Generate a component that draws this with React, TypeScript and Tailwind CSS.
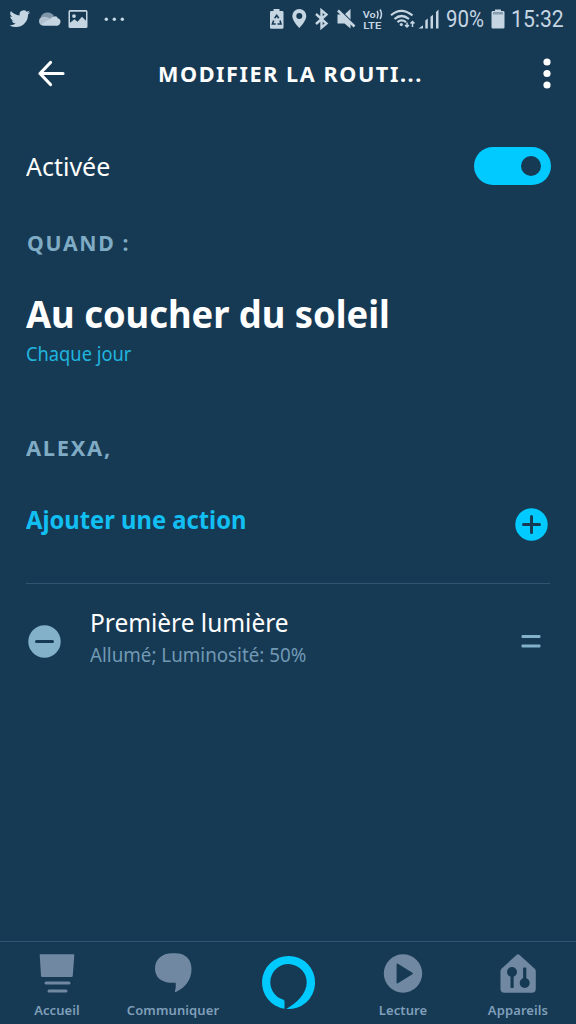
import type { ReactNode } from 'react';

function StatusBar() {
  return (
    <div className="flex h-10 items-center text-[#c5d5e2]">
      <svg className="h-10 w-[440px] shrink-0" viewBox="0 0 440 40" fill="currentColor">
        <path transform="translate(9.5 8.400) scale(.86)" d="M23.95 4.57a10 10 0 0 1-2.82.77 4.96 4.96 0 0 0 2.16-2.72c-.95.55-2 .95-3.13 1.18a4.92 4.92 0 0 0-8.38 4.48C7.69 8.1 4.07 6.13 1.64 3.16a4.92 4.92 0 0 0 1.52 6.57 4.9 4.9 0 0 1-2.23-.61v.06a4.92 4.92 0 0 0 3.95 4.83 5 5 0 0 1-2.21.08 4.94 4.94 0 0 0 4.6 3.42A9.87 9.87 0 0 1 0 19.54a13.94 13.94 0 0 0 7.55 2.21c9.05 0 14-7.5 14-13.98 0-.21 0-.42-.02-.63a9.94 9.94 0 0 0 2.46-2.55z" />
        <path d="M40.500 17.500a7.500 7.500 0 0 1 13.500-1.500l-4 4z" fill="#7f97aa" />
        <path d="M43 25.500a4.300 4.300 0 0 1-.5-8.500q4-1 7.500 1.500l7 7z" fill="#b0c0ce" />
        <path d="M41 24.500l9-5.500q2-2.700 5-2.700 2.500.2 2.800 2a3.700 3.700 0 0 1-2.300 7.200H43.500z" />
        <path fillRule="evenodd" d="M70 10h16a1.500 1.500 0 0 1 1.500 1.500v15a1.500 1.500 0 0 1-1.500 1.500H70a1.500 1.500 0 0 1-1.500-1.500v-15A1.500 1.500 0 0 1 70 10zm0 1.800v11l4.500-3.500 3 2.500 4.500-5 4 4v-9zM74 14.200a1.900 1.900 0 1 1 0 3.800 1.900 1.900 0 0 1 0-3.800z" />
        <circle cx="106.300" cy="19.200" r="1.700" /><circle cx="114.300" cy="19.200" r="1.700" /><circle cx="122.300" cy="19.200" r="1.700" />
        <path d="M273.500 9h6v2h2.700a1.300 1.300 0 0 1 1.300 1.300v15.200a1.300 1.300 0 0 1-1.300 1.300h-10.900a1.300 1.300 0 0 1-1.300-1.300V12.300a1.300 1.300 0 0 1 1.300-1.300h2.200z" />
        <path d="M274.700 18.200l2-2.900 2 2.900M280 20.500l1 3.500h-3.500M275.700 24h-3.300l1.300-3.500" fill="none" stroke="#173a54" strokeWidth="1.600" />
        <path fillRule="evenodd" d="M299.300 9a7 7 0 0 0-7 7c0 5 7 12 7 12s7-7 7-12a7 7 0 0 0-7-7zm0 4a3 3 0 1 1 0 6 3 3 0 0 1 0-6z" />
        <path d="M316 14l10.500 9.500-5 4.200V10.300l5 4.200L316 24" fill="none" stroke="currentColor" strokeWidth="2.400" />
        <path d="M337.500 14.500h5.500l7.500 7.500v6.500l-6-5h-7zM345 14l5.500-5v10.500z" />
        <path d="M338 10.500l16.500 16" stroke="currentColor" strokeWidth="2.600" />
        <text x="362.800" y="17.800" fontFamily="Roboto, sans-serif" fontSize="9" fontWeight="600" textLength="13" lengthAdjust="spacingAndGlyphs">Vo</text>
        <path d="M377 11q2 3 0 7.500M380 9.500q3 4.500 0 9.500" fill="none" stroke="currentColor" strokeWidth="1.500" />
        <text x="363.300" y="28.600" fontFamily="Roboto, sans-serif" fontSize="9" fontWeight="600" textLength="18" lengthAdjust="spacingAndGlyphs">LTE</text>
        <g fill="none" stroke="currentColor" strokeWidth="2.200">
          <path d="M391 15.300q10-9 21.500 0M394.500 19q7-6 14.500 0M397.500 22.200q4-3.500 8.500 0" />
        </g>
        <circle cx="401.300" cy="24.500" r="1.600" />
        <path d="M407 22.500v4.500M405 25l2 2 2-2M412.500 27v-5M410.500 23.500l2-2 2 2" fill="none" stroke="currentColor" strokeWidth="1.500" />
        <path d="M418.500 28.500l4.500-3.300v3.300zM425.300 20.500l2.500-2v10h-2.500zM430.500 16.700l2.500-2v13.800h-2.500zM436 12l2.500-2.500v19H436z" />
      </svg>
      <div className="ml-[6px] w-[38.500px] whitespace-nowrap font-['Roboto'] text-[23px] leading-10"><span className="inline-block origin-left scale-x-[.89]">90%</span></div>
      <svg className="ml-[6px] h-10 w-[14px] shrink-0" viewBox="0 0 14 40" fill="currentColor"><path d="M4 9.500h6v1.500h2.500A1.300 1.300 0 0 1 13.500 12.300v15a1.300 1.300 0 0 1-1.300 1.300H1.800a1.300 1.300 0 0 1-1.300-1.300v-15A1.300 1.300 0 0 1 1.800 11H4z" /><path d="M2 12h10v2.500H2z" opacity=".35" fill="#173a54" /></svg>
      <div className="ml-[6px] whitespace-nowrap font-['Roboto'] text-[23px] leading-10"><span className="inline-block origin-left scale-x-[.92]">15:32</span></div>
    </div>
  );
}

function NavItem({ label, width, children }: { label: string; width: string; children: ReactNode }) {
  return (
    <div className={`flex h-full flex-col items-center pt-[11px] ${width}`}>
      <svg className="overflow-visible" width="40" height="42" viewBox="0 0 40 42" fill="currentColor">{children}</svg>
      <span className="mt-[5px] text-[13px] font-semibold leading-[20px] tracking-[.1px] text-[#7f9fba]">{label}</span>
    </div>
  );
}

export default function App() {
  return (
    <div className="flex h-[1024px] w-[576px] flex-col overflow-hidden bg-[#173a54] font-['Noto_Sans','Open_Sans',sans-serif] text-white">
      <StatusBar />
      <header className="flex h-[68px] items-center">
        <svg className="ml-[37px]" width="28" height="28" viewBox="0 0 28 28" fill="none" stroke="white" strokeWidth="3.200" strokeLinecap="round" strokeLinejoin="round"><path d="M26 13.500H3M13.500 2.500L3 13.500l10.500 11" /></svg>
        <h1 className="-mt-[2px] ml-[92.500px] w-[370.500px] whitespace-nowrap text-[22px] font-bold leading-[30px]"><span className="inline-block origin-left scale-x-[.983] tracking-[1.600px]">MODIFIER LA ROUTI...</span></h1>
        <svg className="ml-[12px] shrink-0" width="14" height="32" viewBox="0 0 14 32" fill="white"><circle cx="7" cy="4" r="3.600" /><circle cx="7" cy="15.500" r="3.600" /><circle cx="7" cy="27" r="3.600" /></svg>
      </header>

      <main className="flex-1 px-[26px]">
        <div className="mt-[38px] flex h-10 items-center justify-between">
          <span className="origin-left scale-x-[.96] text-[26px] leading-10">Activée</span>
          <div className="-mr-[.5px] flex h-[38px] w-[77px] items-center justify-end rounded-full bg-[#00caff] pr-[10px]"><div className="size-[20px] rounded-full bg-[#173a54]" /></div>
        </div>
        <h2 className="ml-[.5px] mt-[41px] origin-left scale-x-[.965] whitespace-nowrap text-[22px] font-bold leading-[30px] tracking-[1.700px] text-[#7fabc4]">QUAND :</h2>
        <div className="mt-[32px] origin-left scale-x-[.981] whitespace-nowrap text-[37px] font-bold leading-[50px]">Au coucher du soleil</div>
        <div className="mt-[2px] origin-left scale-x-[.962] text-[19px] leading-[26px] text-[#20b5df]">Chaque jour</div>
        <h2 className="mt-[65px] origin-left scale-x-[.995] text-[22px] font-bold leading-[30px] tracking-[1.700px] text-[#7fabc4]">ALEXA,</h2>
        <div className="mt-[40px] flex h-[82px] justify-between border-b border-[#315470]">
          <span className="origin-left scale-x-[.95] text-[25px] font-bold leading-[34px] text-[#11bff2]">Ajouter une action</span>
          <svg className="mr-[2.500px] mt-[6px]" width="33" height="33" viewBox="0 0 33 33"><circle cx="16.500" cy="16.500" r="16.200" fill="#00caff" /><path d="M8.500 16.500h16M16.500 8.500v16" stroke="#173a54" strokeWidth="3" strokeLinecap="round" /></svg>
        </div>
        <div className="flex pt-[20px]">
          <svg className="ml-[2px] mt-[21px]" width="33" height="33" viewBox="0 0 33 33"><circle cx="16.500" cy="16.500" r="16.200" fill="#82b1c9" /><path d="M8.500 16.500h16" stroke="#173a54" strokeWidth="3" strokeLinecap="round" /></svg>
          <div className="ml-[28.500px] flex-1 whitespace-nowrap">
            <div className="origin-left scale-x-[.94] text-[26px] leading-[36px]">Première lumière</div>
            <div className="mt-[2px] origin-left scale-x-[.988] text-[19px] leading-[26px] text-[#7199b4]">Allumé; Luminosité: 50%</div>
          </div>
          <svg className="mr-[9px] mt-[30px]" width="20" height="16" viewBox="0 0 20 16" fill="#82b1c9"><rect x=".500" y="1" width="19" height="3" rx="1" /><rect x=".500" y="10.500" width="19" height="3" rx="1" /></svg>
        </div>
      </main>

      <nav className="flex h-[83px] shrink-0 border-t border-[#315470] text-[#7088a1]">
        <NavItem label="Accueil" width="w-[114px]">
          <path d="M3.500 1.300h33q.8 0 .8.800l-1.500 20.500q0 1.500-1.500 1.500h-29Q4 24.100 4 22.600L2.700 2.100Q2.700 1.300 3.500 1.300z" />
          <rect x="7.500" y="28.600" width="26" height="3" rx="1.500" /><rect x="10.500" y="36.600" width="20" height="3" rx="1.500" />
        </NavItem>
        <NavItem label="Communiquer" width="w-[118px]">
          <path d="M19 .3h3.500C32.500.3 38.500 6.500 38.500 16c0 11-6 18.300-15.500 22.900q-1.500.6-1-1 1.200-4.500.7-8.200H18C8 29.500 2 24 2 15.500 2 6.500 9 .3 19 .3z" />
        </NavItem>
        <div className="flex w-[112px] justify-center pt-[13px]">
          <svg className="overflow-visible" width="54" height="54" viewBox="-.5 -.4 54 54"><path fill="#00caff" fillRule="evenodd" d="M27 .6A26.500 26.500 0 0 0 23 53.300V46.300Q23 44.800 21.500 44.200A18.200 18.200 0 1 1 45.200 27C45.200 38 35 47.500 24.800 53.500A26.500 26.500 0 1 0 27 .6z" /></svg>
        </div>
        <NavItem label="Lecture" width="w-[118px]">
          <path fillRule="evenodd" d="M20 1.300a19.200 19.200 0 1 1 0 38.400 19.200 19.200 0 0 1 0-38.400zM13.600 11.500v18q0 1.500 1.300.8l14.500-9q1-.8 0-1.600L14.900 10.700q-1.300-.7-1.300.8z" />
        </NavItem>
        <NavItem label="Appareils" width="w-[112px]">
          <path d="M18.700 1.800q1.300-1.300 2.600 0L36.500 15.500q1.300 1 1.300 2.500v17.800a4 4 0 0 1-4 4H6.500a4 4 0 0 1-4-4V18q0-1.500 1.200-2.500z" />
          <g fill="#173a54"><circle cx="14" cy="19" r="5" /><circle cx="26.700" cy="30" r="5" /><rect x="12.500" y="19" width="3.200" height="16" rx=".8" /><rect x="25.100" y="14.500" width="3.200" height="16" rx=".8" /></g>
        </NavItem>
      </nav>
    </div>
  );
}
